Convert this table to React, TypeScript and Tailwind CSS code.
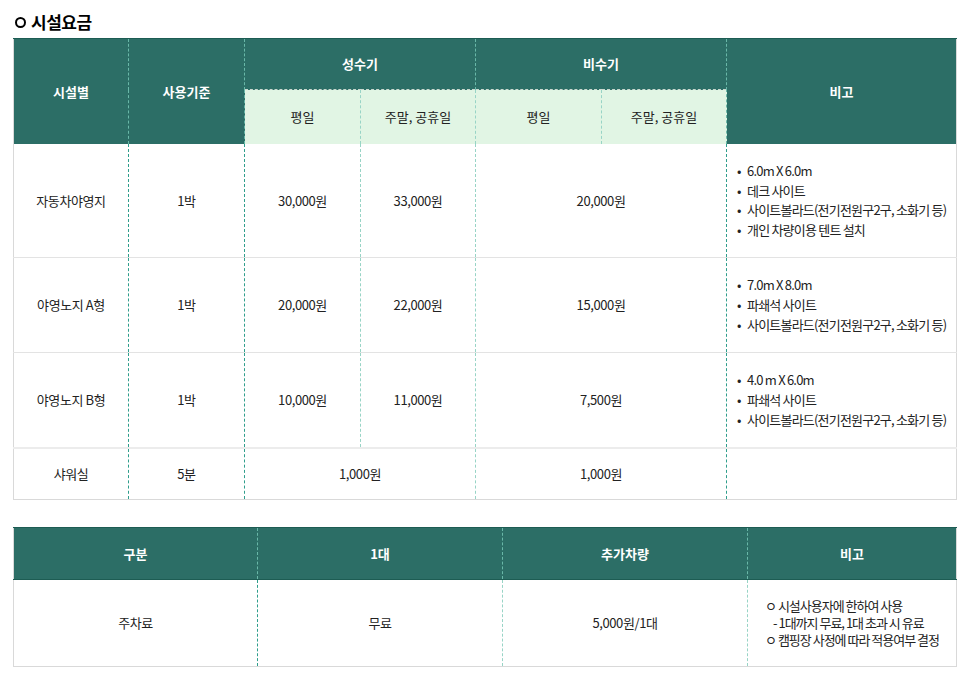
import React from "react";

const dashMain = "border-l border-dashed border-l-[#2f9e8c]";
const dashSub = "border-l border-dashed border-l-[#98d4c6]";
const dashHead = "border-l border-dashed border-l-[#69b8a8]";

function Remarks({ items }: { items: string[] }) {
  return (
    <ul className="pl-[10px] text-left leading-[19.7px] tracking-[-0.8px]">
      {items.map((t, i) => (
        <li key={i} className="flex">
          <span className="w-[10px] shrink-0">•</span>
          <span>{t}</span>
        </li>
      ))}
    </ul>
  );
}

export default function App() {
  return (
    <div className="bg-white w-[966px] h-[679px] pl-[13px] pt-[11px] font-['Noto_Sans_CJK_KR',sans-serif] text-[13px] text-[#222]">
      <h2 className="flex items-center gap-[5px] pl-[2px] text-[17px] font-bold leading-[22px] text-black tracking-[-0.5px]">
        <span className="inline-block w-[11px] h-[11px] rounded-full border-2 border-black" />
        시설요금
      </h2>
      <table className="mt-[5px] w-[943px] table-fixed border-collapse border border-[#d9d9d9] text-center">
        <colgroup>
          <col className="w-[115px]" />
          <col className="w-[116px]" />
          <col className="w-[116px]" />
          <col className="w-[115px]" />
          <col className="w-[126px]" />
          <col className="w-[125px]" />
          <col className="w-[230px]" />
        </colgroup>
        <thead className="text-white font-bold">
          <tr className="h-[51px] bg-[#2c6e66] border-t border-t-[#1d5c53]">
            <th rowSpan={2} className="font-bold bg-[#2c6e66]">시설별</th>
            <th rowSpan={2} className={`font-bold bg-[#2c6e66] ${dashHead}`}>사용기준</th>
            <th colSpan={2} className={`font-bold ${dashHead}`}>성수기</th>
            <th colSpan={2} className={`font-bold ${dashHead}`}>비수기</th>
            <th rowSpan={2} className={`font-bold bg-[#2c6e66] ${dashHead}`}>비고</th>
          </tr>
          <tr className="h-[54px] text-[#222] font-normal">
            <th className={`font-normal bg-[#e1f5e4] border-t border-t-[#c9d8cf] ${dashHead}`}>평일</th>
            <th className={`font-normal bg-[#e1f5e4] border-t border-t-[#c9d8cf] ${dashSub}`}>주말, 공휴일</th>
            <th className={`font-normal bg-[#e1f5e4] border-t border-t-[#c9d8cf] ${dashSub}`}>평일</th>
            <th className={`font-normal bg-[#e1f5e4] border-t border-t-[#c9d8cf] ${dashSub}`}>주말, 공휴일</th>
          </tr>
        </thead>
        <tbody className="tracking-[-0.4px]">
          <tr className="h-[114px] border-b border-b-[#e3e3e3]">
            <td>자동차야영지</td>
            <td className={dashMain}>1박</td>
            <td className={dashMain}>30,000원</td>
            <td className={dashSub}>33,000원</td>
            <td colSpan={2} className={dashSub}>20,000원</td>
            <td className={dashMain}>
              <Remarks items={["6.0m X 6.0m", "데크 사이트", "사이트볼라드(전기전원구2구, 소화기 등)", "개인 차량이용 텐트 설치"]} />
            </td>
          </tr>
          <tr className="h-[95px] border-b border-b-[#e3e3e3]">
            <td>야영노지 A형</td>
            <td className={dashMain}>1박</td>
            <td className={dashMain}>20,000원</td>
            <td className={dashSub}>22,000원</td>
            <td colSpan={2} className={dashSub}>15,000원</td>
            <td className={dashMain}>
              <Remarks items={["7.0m X 8.0m", "파쇄석 사이트", "사이트볼라드(전기전원구2구, 소화기 등)"]} />
            </td>
          </tr>
          <tr className="h-[95px] border-b-2 border-b-[#ececec]">
            <td>야영노지 B형</td>
            <td className={dashMain}>1박</td>
            <td className={dashMain}>10,000원</td>
            <td className={dashSub}>11,000원</td>
            <td colSpan={2} className={dashSub}>7,500원</td>
            <td className={dashMain}>
              <Remarks items={["4.0 m X 6.0m", "파쇄석 사이트", "사이트볼라드(전기전원구2구, 소화기 등)"]} />
            </td>
          </tr>
          <tr className="h-[52px]">
            <td>샤워실</td>
            <td className={dashMain}>5분</td>
            <td colSpan={2} className={dashMain}>1,000원</td>
            <td colSpan={2} className={dashSub}>1,000원</td>
            <td className={dashMain}></td>
          </tr>
        </tbody>
      </table>

      <table className="mt-[27px] w-[943px] table-fixed border-collapse border border-[#d9d9d9] text-center">
        <colgroup>
          <col className="w-[244px]" />
          <col className="w-[245px]" />
          <col className="w-[245px]" />
          <col className="w-[209px]" />
        </colgroup>
        <thead>
          <tr className="h-[52px] bg-[#2c6e66] text-white border-y border-y-[#1d5c53]">
            <th className="font-bold">구분</th>
            <th className={`font-bold ${dashHead}`}>1대</th>
            <th className={`font-bold ${dashHead}`}>추가차량</th>
            <th className={`font-bold ${dashHead}`}>비고</th>
          </tr>
        </thead>
        <tbody className="tracking-[-0.4px]">
          <tr className="h-[87px]">
            <td>주차료</td>
            <td className={dashMain}>무료</td>
            <td className={dashSub}>5,000원/1대</td>
            <td className={dashSub}>
              <div className="inline-block text-left leading-[17px] tracking-[-1px]">
                <div>ㅇ 시설사용자에 한하여 사용</div>
                <div className="pl-[8px]">- 1대까지 무료, 1대 초과 시 유료</div>
                <div>ㅇ 캠핑장 사정에 따라 적용여부 결정</div>
              </div>
            </td>
          </tr>
        </tbody>
      </table>
    </div>
  );
}
